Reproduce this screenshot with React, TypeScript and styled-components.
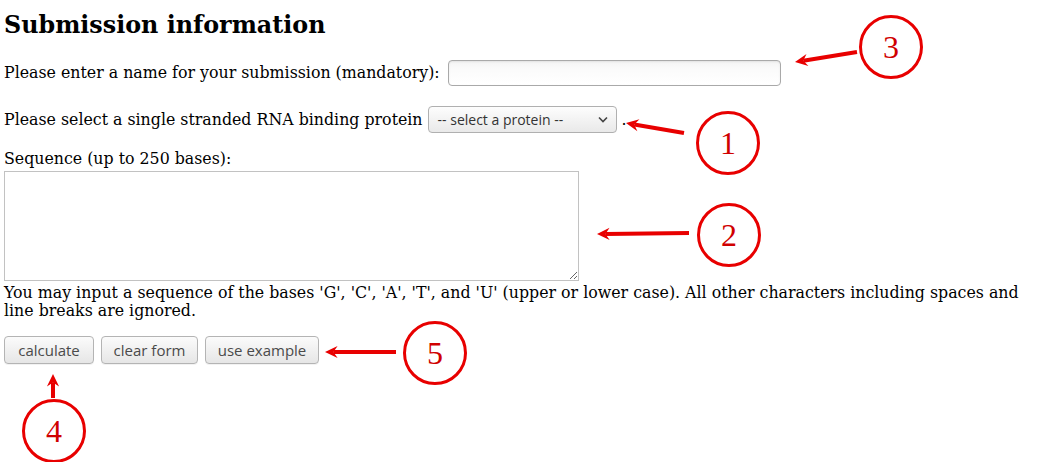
import React from "react";
import styled, { createGlobalStyle } from "styled-components";

const Global = createGlobalStyle`
  html, body { margin: 0; padding: 0; background: #fff; }
  body { font-family: "DejaVu Serif", serif; font-size: 15.8px; color: #000; }
`;

const Page = styled.div`
  position: relative;
  width: 1052px;
  height: 462px;
  padding: 0 8px 0 4px;
  box-sizing: border-box;
  overflow: hidden;
`;

const Heading = styled.h2`
  font-family: "DejaVu Serif", serif;
  font-weight: bold;
  font-size: 23.8px;
  line-height: 28px;
  margin: 11px 0 0 0;
`;

const Row = styled.div<{ $mt: number }>`
  display: flex;
  align-items: center;
  margin-top: ${(p) => p.$mt}px;
  line-height: 18px;
  white-space: nowrap;
`;

const Label = styled.span<{ $gap: number }>`
  margin-right: ${(p) => p.$gap}px;
`;

const TextInput = styled.input`
  width: 333px;
  height: 26px;
  box-sizing: border-box;
  border: 1px solid #a9a9a9;
  border-radius: 4px;
  background: linear-gradient(#f4f4f4, #fbfbfb 40%, #fff);
  box-shadow: inset 0 1px 2px rgba(0, 0, 0, 0.08);
  padding: 0 6px;
  font-family: "Open Sans", sans-serif;
  font-size: 13px;
  outline: none;
`;

const SelectBox = styled.div`
  display: inline-flex;
  align-items: center;
  justify-content: space-between;
  width: 189px;
  height: 27px;
  box-sizing: border-box;
  border: 1px solid #b0b0b0;
  border-radius: 4px;
  background: linear-gradient(#fdfdfd, #e9e9e9);
  padding: 0 8px 0 9px;
  font-family: "Open Sans", sans-serif;
  font-size: 14px;
  color: #333;
`;

const Block = styled.div<{ $mt: number }>`
  margin-top: ${(p) => p.$mt}px;
  line-height: 18px;
`;

const Area = styled.textarea`
  display: block;
  width: 575px;
  height: 110px;
  box-sizing: border-box;
  margin: 3px 0 0 0;
  border: 1px solid #c2c2c2;
  border-radius: 0;
  resize: both;
  outline: none;
`;

const Note = styled.p`
  margin: 3px 0 0 0;
  line-height: 18px;
  width: 1030px;
`;

const Buttons = styled.div`
  display: flex;
  gap: 7px;
  margin-top: 16px;
`;

const Btn = styled.button<{ $w: number }>`
  width: ${(p) => p.$w}px;
  height: 28px;
  box-sizing: border-box;
  border: 1px solid #b4b4b4;
  border-radius: 4px;
  background: linear-gradient(#fbfbfb, #e6e6e6);
  font-family: "Open Sans", sans-serif;
  font-size: 15px;
  color: #4a4a4a;
  padding: 0;
  box-shadow: 0 1px 0 rgba(0,0,0,0.05);
`;

const Overlay = styled.svg`
  position: absolute;
  left: 0;
  top: 0;
  width: 1052px;
  height: 462px;
  pointer-events: none;
`;

const RED = "#e80000";

function Marker({ cx, cy, n }: { cx: number; cy: number; n: string }) {
  return (
    <g>
      <circle cx={cx} cy={cy} r={30.5} fill="none" stroke={RED} strokeWidth={3} />
      <text
        x={cx}
        y={cy + 11}
        textAnchor="middle"
        fontFamily="Liberation Serif, serif"
        fontSize={32}
        fill="#d00000"
      >
        {n}
      </text>
    </g>
  );
}

function Arrow({ x1, y1, x2, y2 }: { x1: number; y1: number; x2: number; y2: number }) {
  const ang = Math.atan2(y2 - y1, x2 - x1);
  const len = 14;
  const spread = 0.45;
  const ax = x2 - len * Math.cos(ang - spread);
  const ay = y2 - len * Math.sin(ang - spread);
  const bx = x2 - len * Math.cos(ang + spread);
  const by = y2 - len * Math.sin(ang + spread);
  const mx = x2 - len * 0.6 * Math.cos(ang);
  const my = y2 - len * 0.6 * Math.sin(ang);
  return (
    <g>
      <line x1={x1} y1={y1} x2={mx} y2={my} stroke={RED} strokeWidth={4} />
      <path d={`M${x2},${y2} L${ax},${ay} L${mx},${my} L${bx},${by} Z`} fill={RED} />
    </g>
  );
}

export default function App() {
  return (
    <>
      <Global />
      <Page>
        <Heading>Submission information</Heading>
        <Row $mt={21}>
          <Label $gap={8}>Please enter a name for your submission (mandatory):</Label>
          <TextInput type="text" />
        </Row>
        <Row $mt={20}>
          <Label $gap={5}>Please select a single stranded RNA binding protein</Label>
          <SelectBox>
            <span>-- select a protein --</span>
            <svg width="10" height="7" viewBox="0 0 10 7">
              <path d="M1 1.5 L5 5.5 L9 1.5" fill="none" stroke="#444" strokeWidth="1.6" />
            </svg>
          </SelectBox>
          <span>&nbsp;.</span>
        </Row>
        <Block $mt={17}>Sequence (up to 250 bases):</Block>
        <Area />
        <Note>
          You may input a sequence of the bases 'G', 'C', 'A', 'T', and 'U' (upper or lower case). All other
          characters including spaces and line breaks are ignored.
        </Note>
        <Buttons>
          <Btn $w={90}>calculate</Btn>
          <Btn $w={97}>clear form</Btn>
          <Btn $w={114}>use example</Btn>
        </Buttons>
        <Overlay viewBox="0 0 1052 462">
          <Marker cx={891} cy={47} n="3" />
          <Arrow x1={857} y1={52} x2={795} y2={62} />
          <Marker cx={728} cy={143} n="1" />
          <Arrow x1={684} y1={133} x2={626} y2={123} />
          <Marker cx={729} cy={235} n="2" />
          <Arrow x1={689} y1={233} x2={597} y2={234} />
          <Marker cx={435} cy={353} n="5" />
          <Arrow x1={396} y1={352} x2={325} y2={352} />
          <Marker cx={54} cy={431} n="4" />
          <Arrow x1={53} y1={398} x2={53} y2={374} />
        </Overlay>
      </Page>
    </>
  );
}
